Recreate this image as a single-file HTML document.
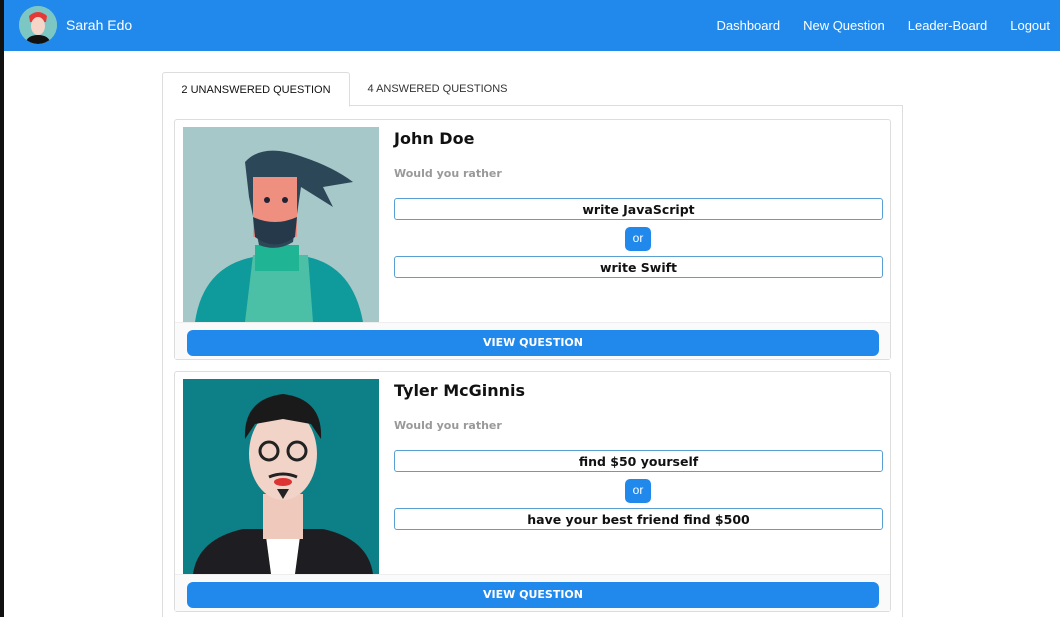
<!DOCTYPE html>
<html style="overflow:hidden;height:617px"><head><style>
*{box-sizing:border-box;margin:0;padding:0}
body{width:1060px;height:617px;overflow:hidden;background:#fff;font-family:"Liberation Sans",sans-serif;position:relative}
.lb{position:absolute;left:0;top:0;width:4px;height:617px;background:#111}
.nav{position:absolute;left:4px;top:0;width:1056px;height:51px;background:#2189ec;color:#fff}
.nav .name{position:absolute;left:62px;top:17px;font-size:14px}
.nav .links{position:absolute;right:10px;top:18px;font-size:13px}
.nav .links span{margin-left:23px}
.av{position:absolute;left:15px;top:6px;width:38px;height:38px;border-radius:50%;overflow:hidden;background:#7cc7c4}
.tabs{position:absolute;left:162px;top:72px;width:741px;height:34px;border-bottom:1px solid #ddd}
.tab{position:absolute;top:0;height:35px;font-size:11px;padding-top:11px;text-align:center;color:#333}
.t1{left:0;width:188px;border:1px solid #ddd;border-bottom:1px solid #fff;border-radius:3px 3px 0 0;background:#fff;color:#111}
.t2{left:188px;width:175px}
.box{position:absolute;left:162px;top:106px;width:741px;height:520px;border-left:1px solid #ddd;border-right:1px solid #ddd}
.card{position:absolute;left:174px;width:717px;height:241px;border:1px solid #ddd;border-radius:3px}
.img{position:absolute;left:8px;top:7px;width:196px;height:195px;overflow:hidden}
.nm{position:absolute;left:219px;top:9px;font-family:"DejaVu Sans",sans-serif;font-weight:bold;font-size:16px;color:#111}
.wy{position:absolute;left:219px;top:47px;font-family:"DejaVu Sans",sans-serif;font-weight:bold;font-size:11px;color:#999}
.opt{position:absolute;left:219px;width:489px;height:22px;border:1px solid #5a9fd4;border-radius:3px;text-align:center;font-family:"DejaVu Sans",sans-serif;font-weight:bold;font-size:12.5px;color:#111;padding-top:3px}
.or{position:absolute;left:450px;top:107px;width:26px;height:24px;background:#2189ec;border-radius:5px;color:#fff;font-size:12px;text-align:center;padding-top:4px}
.foot{position:absolute;left:0;top:202px;width:715px;height:37px;background:#fafafa;border-top:1px solid #eee}
.btn{position:absolute;left:12px;top:210px;width:692px;height:26px;background:#2189ec;border-radius:6px;color:#fff;text-align:center;font-family:"DejaVu Sans",sans-serif;font-weight:bold;font-size:11px;padding-top:6px}
</style></head><body>
<div class="lb"></div>
<div class="nav">
<div class="av"><svg width="38" height="38"><rect width="38" height="38" fill="#7cc7c4"/><path d="M10 10 Q19 2 28 10 L27 16 L11 16Z" fill="#e53935"/><ellipse cx="19" cy="20" rx="7" ry="9" fill="#f5d5c8"/><path d="M6 38 Q8 29 19 29 Q30 29 32 38Z" fill="#111"/></svg></div>
<div class="name">Sarah Edo</div>
<div class="links"><span>Dashboard</span><span>New Question</span><span>Leader-Board</span><span>Logout</span></div>
</div>
<div class="tabs"><div class="tab t1">2 UNANSWERED QUESTION</div><div class="tab t2">4 ANSWERED QUESTIONS</div></div>
<div class="box"></div>
<div class="card" style="top:119px">
<div class="img"><svg width="196" height="195"><rect width="196" height="195" fill="#a7c8c9"/><path d="M12 195 Q20 140 70 130 L125 130 Q170 140 180 195Z" fill="#0f9a9c"/><path d="M70 128 L125 128 L130 195 L62 195Z" fill="#4bc0a6"/><rect x="72" y="118" width="44" height="26" fill="#1eb494"/><path d="M62 35 Q80 15 120 30 Q150 40 170 55 L140 60 L150 80 L118 60 L110 115 Q94 125 76 118 L66 70Z" fill="#2c4858"/><rect x="70" y="50" width="44" height="60" fill="#ee8f80"/><circle cx="84" cy="73" r="3" fill="#223"/><circle cx="102" cy="73" r="3" fill="#223"/><path d="M70 90 Q92 100 114 90 L112 110 Q92 125 72 110Z" fill="#25394a"/></svg></div>
<div class="nm">John Doe</div><div class="wy">Would you rather</div>
<div class="opt" style="top:78px">write JavaScript</div><div class="or">or</div>
<div class="opt" style="top:136px">write Swift</div>
<div class="foot"></div><div class="btn">VIEW QUESTION</div>
</div>
<div class="card" style="top:371px">
<div class="img"><svg width="196" height="195"><rect width="196" height="195" fill="#0d7f86"/><path d="M10 195 Q15 160 60 150 L140 150 Q185 160 190 195Z" fill="#1e1e22"/><path d="M82 150 L118 150 L112 195 L88 195Z" fill="#fff"/><rect x="80" y="115" width="40" height="45" fill="#f0c9bd"/><ellipse cx="100" cy="75" rx="34" ry="46" fill="#f1d3c8"/><path d="M62 60 Q60 20 100 15 Q140 20 138 60 L128 45 L100 40 L72 45Z" fill="#1a1a1a"/><circle cx="86" cy="72" r="9" fill="none" stroke="#222" stroke-width="3"/><circle cx="114" cy="72" r="9" fill="none" stroke="#222" stroke-width="3"/><path d="M86 98 Q100 92 114 98" stroke="#222" stroke-width="3" fill="none"/><ellipse cx="100" cy="103" rx="9" ry="4" fill="#d33"/><path d="M94 110 L106 110 L100 120Z" fill="#222"/></svg></div>
<div class="nm">Tyler McGinnis</div><div class="wy">Would you rather</div>
<div class="opt" style="top:78px">find $50 yourself</div><div class="or">or</div>
<div class="opt" style="top:136px">have your best friend find $500</div>
<div class="foot"></div><div class="btn">VIEW QUESTION</div>
</div>
</body></html>
